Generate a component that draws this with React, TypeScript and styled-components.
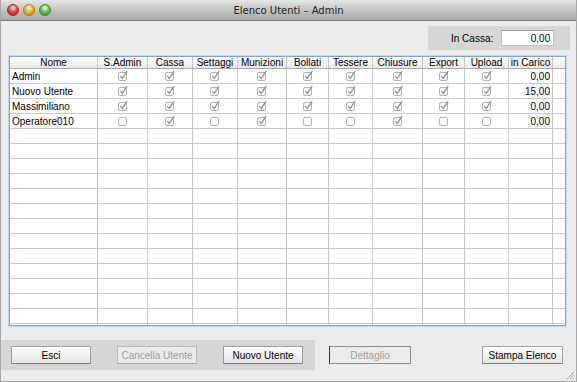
import React from 'react';
import styled, { createGlobalStyle } from 'styled-components';

const GlobalStyle = createGlobalStyle`
  html, body {
    margin: 0;
    padding: 0;
    background: #ececec;
  }
  * {
    box-sizing: border-box;
  }
`;

const cols = '88px 50px 45px 45px 49px 42px 44px 50px 42px 44px 44px 1fr';

const Window = styled.div`
  position: relative;
  width: 577px;
  height: 382px;
  display: flex;
  flex-direction: column;
  background: #ececec;
  border: 1px solid #a9a9a9;
  border-top: none;
  font-family: 'Liberation Sans', Arial, sans-serif;
  font-size: 10px;
  color: #000;
  overflow: hidden;
`;

const TitleBar = styled.div`
  height: 21px;
  flex: none;
  display: grid;
  grid-template-columns: 1fr auto 1fr;
  align-items: center;
  background: linear-gradient(#e6e6e6, #bdbdbd 60%, #aaaaaa);
  border-bottom: 1px solid #7d7d7d;
`;

const Lights = styled.div`
  display: flex;
  gap: 4px;
  padding-left: 6px;
`;

const Light = styled.span<{ $c: string; $d: string }>`
  width: 12px;
  height: 12px;
  border-radius: 50%;
  background: radial-gradient(circle at 50% 30%, #ffffff 0, ${p => p.$c} 45%, ${p => p.$d} 100%);
  border: 1px solid ${p => p.$d};
`;

const Title = styled.div`
  font-family: 'DejaVu Sans', 'Liberation Sans', sans-serif;
  font-size: 10px;
  color: #222;
  padding-top: 1px;
`;

const TopRow = styled.div`
  display: flex;
  justify-content: flex-end;
  padding: 5px 6px 0 0;
`;

const CassaPanel = styled.div`
  width: 142px;
  height: 24px;
  background: #d6d6d6;
  display: flex;
  align-items: center;
  padding: 0 0 0 23px;
  gap: 8px;
`;

const CassaLabel = styled.span`
  flex: none;
  white-space: nowrap;
  font-size: 10px;
`;

const CassaInput = styled.div`
  flex: none;
  width: 53px;
  height: 16px;
  background: #fff;
  border: 1px solid #bdbdbd;
  border-top-color: #9a9a9a;
  display: flex;
  align-items: center;
  justify-content: flex-end;
  padding-right: 3px;
`;

const Table = styled.div`
  margin: 6px 0 0 8px;
  width: 557px;
  height: 270px;
  background: #fff;
  border: 1px solid #7fa3cf;
  box-shadow: 0 0 0 1px #c4d6ec;
  overflow: hidden;
`;

const HeaderRow = styled.div`
  display: grid;
  grid-template-columns: ${cols};
  height: 12px;
  background: linear-gradient(#ffffff, #e8e8e8);
  border-bottom: 1px solid #a8a8a8;
`;

const HeaderCell = styled.div`
  border-right: 1px solid #c4c4c4;
  display: flex;
  align-items: center;
  justify-content: center;
  line-height: 11px;
  white-space: nowrap;
  overflow: hidden;
  &:last-child {
    border-right: none;
  }
`;

const Row = styled.div`
  display: grid;
  grid-template-columns: ${cols};
  height: 15px;
  border-bottom: 1px solid #c6c6c6;
`;

const Cell = styled.div<{ $align?: 'left' | 'center' | 'right' }>`
  border-right: 1px solid #c6c6c6;
  display: flex;
  align-items: center;
  justify-content: ${p => (p.$align === 'center' ? 'center' : p.$align === 'right' ? 'flex-end' : 'flex-start')};
  padding: 0 2px;
  white-space: nowrap;
  overflow: hidden;
  &:last-child {
    border-right: none;
  }
`;

const BoxSvg = styled.svg`
  display: block;
  margin-top: -1px;
`;

const Footer = styled.div`
  display: flex;
  align-items: center;
  margin-top: 14px;
`;

const ButtonBand = styled.div`
  width: 314px;
  height: 30px;
  background: #d6d6d6;
  display: flex;
  align-items: center;
  gap: 26px;
  padding-left: 10px;
`;

const Button = styled.div<{ $disabled?: boolean; $w?: number }>`
  width: ${p => p.$w || 80}px;
  height: 18px;
  display: flex;
  align-items: center;
  justify-content: center;
  font-size: 10px;
  color: ${p => (p.$disabled ? '#9c9c9c' : '#000')};
  background: ${p => (p.$disabled ? '#ebebeb' : 'linear-gradient(#ffffff, #f1f1f1 50%, #e4e4e4)')};
  border: 1px solid ${p => (p.$disabled ? '#b9b9b9' : '#9d9d9d')};
  border-bottom-color: ${p => (p.$disabled ? '#a9a9a9' : '#7f7f7f')};
`;

const DetailButton = styled(Button)`
  margin-left: 14px;
  border-color: #8d8d8d;
  border-left-color: #333;
`;

const PrintButton = styled(Button)`
  margin-left: auto;
  margin-right: 13px;
`;

const Grip = styled.svg`
  position: absolute;
  right: 1px;
  bottom: 1px;
`;

const CheckBox: React.FC<{ on: boolean }> = ({ on }) => (
  <BoxSvg width="12" height="11" viewBox="0 0 12 11">
    <rect x="1.5" y="2.5" width="8" height="8" rx="1.5" fill="#fafafa" stroke="#b0b0b0" />
    {on && <path d="M3.3 6 L5.2 8.4 L10.2 1.2" fill="none" stroke="#8a8a8a" strokeWidth="1.2" />}
  </BoxSvg>
);

const headers = ['Nome', 'S.Admin', 'Cassa', 'Settaggi', 'Munizioni', 'Bollati', 'Tessere', 'Chiusure', 'Export', 'Upload', 'in Carico', ''];

const users = [
  { name: 'Admin', perms: [1, 1, 1, 1, 1, 1, 1, 1, 1], carico: '0,00' },
  { name: 'Nuovo Utente', perms: [1, 1, 1, 1, 1, 1, 1, 1, 1], carico: '15,00' },
  { name: 'Massimiliano', perms: [1, 1, 1, 1, 1, 1, 1, 1, 1], carico: '0,00' },
  { name: 'Operatore010', perms: [0, 1, 0, 1, 0, 0, 1, 0, 0], carico: '0,00' },
];

const EMPTY_ROWS = 14;

export default function App() {
  return (
    <>
      <GlobalStyle />
      <Window>
        <TitleBar>
          <Lights>
            <Light $c="#e2463f" $d="#a8231d" />
            <Light $c="#f0b030" $d="#b97a12" />
            <Light $c="#70c04a" $d="#3f8a22" />
          </Lights>
          <Title>Elenco Utenti – Admin</Title>
          <div />
        </TitleBar>

        <TopRow>
          <CassaPanel>
            <CassaLabel>In Cassa:</CassaLabel>
            <CassaInput>0,00</CassaInput>
          </CassaPanel>
        </TopRow>

        <Table>
          <HeaderRow>
            {headers.map((h, i) => (
              <HeaderCell key={i}>{h}</HeaderCell>
            ))}
          </HeaderRow>
          {users.map(u => (
            <Row key={u.name}>
              <Cell>{u.name}</Cell>
              {u.perms.map((p, i) => (
                <Cell key={i} $align="center">
                  <CheckBox on={!!p} />
                </Cell>
              ))}
              <Cell $align="right">{u.carico}</Cell>
              <Cell />
            </Row>
          ))}
          {Array.from({ length: EMPTY_ROWS }).map((_, r) => (
            <Row key={'e' + r}>
              {headers.map((_, i) => (
                <Cell key={i} />
              ))}
            </Row>
          ))}
        </Table>

        <Footer>
          <ButtonBand>
            <Button>Esci</Button>
            <Button $disabled>Cancella Utente</Button>
            <Button>Nuovo Utente</Button>
          </ButtonBand>
          <DetailButton $disabled $w={82}>Dettaglio</DetailButton>
          <PrintButton $w={81}>Stampa Elenco</PrintButton>
        </Footer>

        <Grip width="10" height="10" viewBox="0 0 10 10">
          <path d="M9 2 L2 9 M9 5 L5 9 M9 8 L8 9" stroke="#a0a0a0" strokeWidth="1" />
        </Grip>
      </Window>
    </>
  );
}
